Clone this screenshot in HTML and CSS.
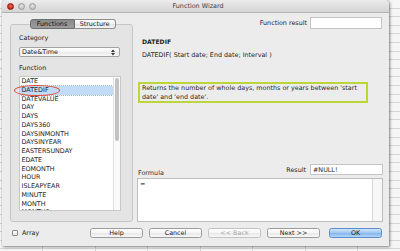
FILE: index.html
```html
<!DOCTYPE html>
<html>
<head>
<meta charset="utf-8">
<title>Function Wizard</title>
<link rel="stylesheet" href="styles.css">
</head>
<body>
<div class="window">
  <div class="titlebar">
    <div class="lights"><span class="light close"></span><span class="light"></span><span class="light"></span></div>
    <div class="title">Function Wizard</div>
  </div>
  <div class="content">
    <div class="left">
      <div class="tabs"><span class="tab active">Functions</span><span class="tab">Structure</span></div>
      <div class="group">
        <div class="label">Category</div>
        <div class="select"><span>Date&amp;Time</span>
          <svg class="updown" width="4" height="7" viewBox="0 0 4 7"><path d="M0 3 L2 0.5 L4 3 Z M0 4 L2 6.5 L4 4 Z" fill="#333"/></svg>
        </div>
        <div class="label fn">Function</div>
        <div class="list">
          <ul class="items">
            <li>DATE</li>
            <li class="sel">DATEDIF</li>
            <li>DATEVALUE</li>
            <li>DAY</li>
            <li>DAYS</li>
            <li>DAYS360</li>
            <li>DAYSINMONTH</li>
            <li>DAYSINYEAR</li>
            <li>EASTERSUNDAY</li>
            <li>EDATE</li>
            <li>EOMONTH</li>
            <li>HOUR</li>
            <li>ISLEAPYEAR</li>
            <li>MINUTE</li>
            <li>MONTH</li>
            <li>MONTHS</li>
          </ul>
          <div class="vscroll"><div class="thumb"></div></div>
        </div>
        <span class="ring"></span>
      </div>
    </div>
    <div class="right">
      <div class="resrow"><span class="lbl">Function result</span><span class="field fres"></span></div>
      <div class="fname">DATEDIF</div>
      <div class="sig">DATEDIF( Start date; End date; Interval )</div>
      <div class="desc">Returns the number of whole days, months or years between 'start<br>date' and 'end date'.</div>
      <div class="formrow"><span class="flabel">Formula</span><span class="rgroup"><span class="lbl">Result</span><span class="field rres">#NULL!</span></span></div>
      <div class="formula"><div class="ftext">=</div><div class="fscroll"></div></div>
    </div>
  </div>
  <div class="buttons">
    <label class="array"><span class="check"></span><span>Array</span></label>
    <div class="btns">
      <span class="btn">Help</span>
      <span class="btn">Cancel</span>
      <span class="btn disabled">&lt;&lt; Back</span>
      <span class="btn">Next &gt;&gt;</span>
      <span class="btn ok">OK</span>
    </div>
  </div>
</div>
</body>
</html>
```

FILE: styles.css
```css
html, body {
  margin: 0;
  padding: 0;
}
body {
  width: 400px;
  height: 251px;
  overflow: hidden;
  font-family: "DejaVu Sans", "Liberation Sans", sans-serif;
  font-size: 6.4px;
  color: #1e1e1e;
  background-color: #f6f6f6;
  background-image:
    repeating-linear-gradient(to bottom, transparent 0 7.6px, #d6d6d6 7.6px 8.6px),
    repeating-linear-gradient(to right, transparent 0 42px, #d0d0d0 42px 43px, transparent 43px 52.5px);
}
.window {
  margin-left: 2px;
  width: 387px;
  height: 246px;
  background: #ececec;
  border-radius: 4px 4px 0 0;
  box-shadow: 1px 1px 3px rgba(0,0,0,0.45), 0 0 1px rgba(0,0,0,0.5);
  display: flex;
  flex-direction: column;
}
.titlebar {
  height: 12px;
  border-bottom: 1px solid #b4b4b4;
  background: linear-gradient(#ececec, #d4d4d4);
  border-radius: 4px 4px 0 0;
  display: flex;
  align-items: center;
  position: relative;
}
.lights {
  display: flex;
  gap: 4px;
  padding-left: 5px;
}
.light {
  width: 5px;
  height: 5px;
  border-radius: 50%;
  background: radial-gradient(circle at 50% 35%, #e6e6e6, #b4b4b4);
  border: 0.5px solid #9a9a9a;
}
.light.close {
  background: radial-gradient(circle at 50% 40%, #f36a5a, #c0281a 70%);
  border-color: #8f1c12;
}
.title {
  position: absolute;
  left: 0;
  right: 0;
  top: 0;
  line-height: 12px;
  text-align: center;
  padding-left: 5px;
  color: #404040;
}
.content {
  display: flex;
  gap: 4px;
  padding: 0 6px 0 8px;
  height: 209px;
}
.left {
  width: 123px;
  padding-top: 6px;
  display: flex;
  flex-direction: column;
}
.tabs {
  display: flex;
  justify-content: center;
  height: 10px;
  position: relative;
  z-index: 2;
  padding-left: 2px;
}
.tab {
  height: 10px;
  box-sizing: border-box;
  line-height: 9px;
  border: 1px solid #8e8e8e;
  background: linear-gradient(#ffffff, #eeeeee 50%, #e2e2e2 51%, #f5f5f5);
  padding: 0;
  text-align: center;
  width: 41px;
  border-radius: 0 3px 3px 0;
  border-left: none;
}
.tab.active {
  width: 45px;
  background: linear-gradient(#8a8a8a, #9d9d9d);
  border: 1px solid #6e6e6e;
  border-radius: 3px 0 0 3px;
  color: #111;
}
.group {
  margin-top: -5px;
  height: 198px;
  box-sizing: border-box;
  border: 1px solid #c6c6c6;
  border-radius: 3px;
  background: #e4e4e4;
  padding: 9px 0 0 8px;
  position: relative;
}
.label {
  line-height: 8px;
  height: 8px;
  color: #222;
}
.select {
  margin-top: 5px;
  width: 101px;
  height: 10px;
  box-sizing: border-box;
  border: 1px solid #a4a4a4;
  border-radius: 2px;
  background: linear-gradient(#ffffff, #f3f3f3 50%, #e9e9e9 51%, #f8f8f8);
  display: flex;
  align-items: center;
  justify-content: space-between;
  padding: 0 4px 0 2px;
  line-height: 8px;
}
.updown { display: block; }
.label.fn { margin-top: 7px; }
.list {
  margin-top: 4px;
  width: 102px;
  height: 135px;
  background: #ffffff;
  box-sizing: border-box;
  border: 0.5px solid #c8c8c8;
  display: flex;
  overflow: hidden;
}
.items {
  list-style: none;
  margin: 0;
  padding: 0;
  flex: 1;
}
.items li {
  height: 8.77px;
  line-height: 8.77px;
  padding-left: 1.5px;
  color: #1a1a1a;
  white-space: nowrap;
}
.items li.sel {
  background: #c2dbf7;
  outline: 0.5px dotted #8fb1dc;
  outline-offset: -0.5px;
}
.vscroll {
  width: 7px;
  border-left: 0.5px solid #e0e0e0;
  background: #fafafa;
  padding: 1px 0 0 1px;
  box-sizing: border-box;
}
.thumb {
  width: 4px;
  height: 63px;
  border-radius: 2px;
  background: #c2c2c2;
}
.ring {
  position: absolute;
  left: 3px;
  top: 59.5px;
  width: 44px;
  height: 9.5px;
  border: 1.2px solid #e34a2c;
  border-radius: 50%;
  background: transparent;
  pointer-events: none;
}
.right {
  width: 246px;
  padding-top: 4px;
  display: flex;
  flex-direction: column;
}
.resrow {
  height: 12px;
  display: flex;
  justify-content: flex-end;
  align-items: center;
  gap: 3px;
  padding-right: 1px;
}
.field {
  display: block;
  background: #fff;
  border: 0.5px solid #c4c4c4;
  box-sizing: border-box;
}
.fres {
  width: 72px;
  height: 12px;
}
.fname {
  margin-top: 9px;
  padding-left: 5px;
  font-weight: bold;
  font-size: 6.1px;
  line-height: 8px;
}
.sig {
  margin-top: 5px;
  padding-left: 5px;
  line-height: 8px;
}
.desc {
  margin-top: 23px;
  margin-left: 1px;
  width: 230px;
  box-sizing: border-box;
  border: 2px solid #bcd63a;
  padding: 0 2px;
  line-height: 8.5px;
  white-space: nowrap;
  color: #2a2a2a;
}
.formrow {
  margin-top: 61px;
  height: 11px;
  display: flex;
  justify-content: space-between;
  align-items: flex-end;
}
.flabel {
  line-height: 8px;
  margin-bottom: -2px;
  padding-left: 1px;
  color: #333;
}
.rgroup {
  display: flex;
  align-items: center;
  gap: 4px;
}
.rres {
  width: 73px;
  height: 11px;
  line-height: 10px;
  padding-left: 2px;
}
.formula {
  margin-top: 3px;
  height: 44px;
  background: #fff;
  border: 0.5px solid #bdbdbd;
  box-sizing: border-box;
  display: flex;
}
.ftext {
  flex: 1;
  padding: 1px 2px;
  line-height: 8px;
  color: #555;
}
.fscroll {
  width: 9px;
  border-left: 0.5px solid #d6d6d6;
  background: #f7f7f7;
}
.buttons {
  margin-top: 6px;
  height: 10px;
  display: flex;
  align-items: center;
  padding: 0 7px 0 10px;
}
.array {
  display: flex;
  align-items: center;
  gap: 4px;
  color: #222;
}
.check {
  width: 6px;
  height: 6px;
  box-sizing: border-box;
  border: 0.5px solid #8a8a8a;
  border-radius: 1px;
  background: linear-gradient(#fdfdfd, #e6e6e6);
}
.btns {
  margin-left: auto;
  display: flex;
  gap: 6px;
}
.btn {
  width: 53px;
  height: 10px;
  box-sizing: border-box;
  border: 0.5px solid #9c9c9c;
  border-radius: 2.5px;
  background: linear-gradient(#ffffff, #f4f4f4 50%, #e8e8e8 51%, #f8f8f8);
  text-align: center;
  line-height: 9px;
  color: #1e1e1e;
}
.btn.disabled {
  color: #a8a8a8;
  border-color: #c2c2c2;
}
.btn.ok {
  margin-left: 3px;
  background: linear-gradient(#cfe4fa, #9dc6f2 50%, #83b5ed 51%, #b3d5f8);
  border-color: #5c8dcc;
}
```
